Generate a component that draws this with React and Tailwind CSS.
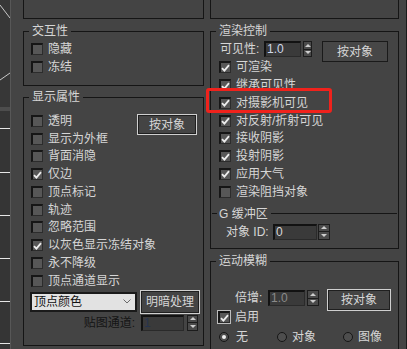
import React from 'react';

const Check = ({ checked, focus }) => (
    <span
        className={`w-[12px] h-[12px] shrink-0 flex items-center justify-center bg-[#575757] border-t-2 border-l-2 border-b border-r border-t-[#161616] border-l-[#161616] border-b-[#2c2c2c] border-r-[#2c2c2c] ${focus ? 'outline outline-1 outline-[#bdbdbd]' : ''}`}
    >
        {checked && (
            <svg width="9" height="8" viewBox="0 0 9 8">
                <path d="M1 4.2 L3.4 6.6 L8 1.2" stroke="#ececec" strokeWidth="1.8" fill="none" />
            </svg>
        )}
    </span>
);

const CheckRow = ({ label, checked, focus }) => (
    <div className="h-[17.75px] flex items-center gap-[5px]">
        <Check checked={checked} focus={focus} />
        <span className="leading-[14px] whitespace-nowrap">{label}</span>
    </div>
);

const Arrows = ({ className }) => (
    <div className={`h-[16px] shrink-0 flex flex-col border border-[#1c1c1c] bg-[#4a4a4a] ${className}`}>
        <div className="flex-1 flex items-center justify-center border-b border-[#1c1c1c]">
            <svg width="6" height="3" viewBox="0 0 6 3"><path d="M0 3 L3 0 L6 3Z" fill="#cdcdcd" /></svg>
        </div>
        <div className="flex-1 flex items-center justify-center">
            <svg width="6" height="3" viewBox="0 0 6 3"><path d="M0 0 L3 3 L6 0Z" fill="#cdcdcd" /></svg>
        </div>
    </div>
);

const Field = ({ value, className, textClass }) => (
    <div className={`h-[16px] shrink-0 bg-[#3a3a3a] border-t-2 border-l-2 border-t-[#121212] border-l-[#121212] border-b border-r border-b-[#2a2a2a] border-r-[#2a2a2a] pl-[1px] leading-[12px] text-[12px] ${className} ${textClass}`}>
        {value}
    </div>
);

const Button = ({ label, className }) => (
    <div className={`shrink-0 flex items-center justify-center border border-[#cfcfcf] bg-[#444] ${className}`}>
        <div className="w-full h-full flex items-center justify-center border border-[#1f1f1f] leading-[14px]">{label}</div>
    </div>
);

// group box: title sits on the top border
const Group = ({ title, className, children }) => (
    <div className={`shrink-0 border border-[#151515] ${className}`}>
        <div className="-mt-[8px] ml-[5px] px-[3px] w-fit bg-[#444] leading-[14px] whitespace-nowrap">{title}</div>
        {children}
    </div>
);

const Radio = ({ on }) => (
    <span className="w-[10px] h-[10px] rounded-full shrink-0 flex items-center justify-center bg-[#4e4e4e] border border-[#161616]">
        {on && <span className="w-[4px] h-[4px] rounded-full bg-[#f0f0f0]" />}
    </span>
);

const Viewport = () => (
    <svg width="10" height="349" viewBox="0 0 10 349" className="shrink-0">
        <rect x="0" y="0" width="10" height="107" fill="#373737" />
        <rect x="0" y="107" width="10" height="4" fill="#4d4d4d" />
        <rect x="0" y="111" width="10" height="238" fill="#353535" />
        <line x1="0" y1="5" x2="10" y2="18" stroke="#c8c8c8" strokeWidth="1" />
        <line x1="0" y1="80" x2="10" y2="73" stroke="#c8c8c8" strokeWidth="1" />
        {[128, 172, 215, 258, 301, 343].map((y) => (
            <line key={y} x1="0" y1={y + 0.5} x2="10" y2={y + 0.5} stroke="#e6e6e6" strokeWidth="1" />
        ))}
    </svg>
);

export default function App() {
    return (
        <div className="w-[407px] h-[349px] overflow-hidden relative flex bg-[#444] text-[12px] text-[#d6d6d6] font-['Liberation_Sans','Noto_Sans_CJK_SC',sans-serif]">
            <Viewport />
            <div className="w-px bg-[#575757] shrink-0" />

            <div className="flex gap-[6px] pl-[12px] shrink-0">
                {/* left column */}
                <div className="w-[181px] flex flex-col">
                    <div className="h-[19px] shrink-0 border-x border-b border-[#151515]" />

                    <Group title="交互性" className="mt-[12px] h-[55px]">
                        <div className="mt-[2px] pl-[7px]">
                            <div className="h-[18px] flex items-center gap-[5px]"><Check /><span className="leading-[14px]">隐藏</span></div>
                            <div className="h-[18px] flex items-center gap-[5px]"><Check /><span className="leading-[14px]">冻结</span></div>
                        </div>
                    </Group>

                    <Group title="显示属性" className="mt-[11px] h-[249px]">
                        <div className="mt-[8px] flex">
                            <div className="flex-1 min-w-0 pl-[7px]">
                                <CheckRow label="透明" />
                                <CheckRow label="显示为外框" />
                                <CheckRow label="背面消隐" />
                                <CheckRow label="仅边" checked />
                                <CheckRow label="顶点标记" />
                                <CheckRow label="轨迹" />
                                <CheckRow label="忽略范围" />
                                <CheckRow label="以灰色显示冻结对象" checked />
                                <CheckRow label="永不降级" />
                                <CheckRow label="顶点通道显示" />
                            </div>
                            <Button label="按对象" className="mt-[2px] mr-[6px] w-[60px] h-[21px]" />
                        </div>

                        <div className="h-[24px] flex items-center gap-[3px] pl-[6px]">
                            <div className="w-[107px] h-[20px] shrink-0 bg-[#e2e2e2] border-2 border-[#1a1a1a] flex items-center justify-between pl-[2px] pr-[4px] text-[#111] leading-[14px]">
                                <span>顶点颜色</span>
                                <svg width="8" height="5" viewBox="0 0 8 5"><path d="M0.5 0.5 L4 4 L7.5 0.5" stroke="#6a6a6a" strokeWidth="1" fill="none" /></svg>
                            </div>
                            <Button label="明暗处理" className="w-[60px] h-[24px]" />
                        </div>

                        <div className="mt-[1px] h-[16px] flex items-center justify-end pr-[5px]">
                            <span className="text-[#141414] leading-[14px] mr-[6px]">贴图通道:</span>
                            <Field value="1" className="w-[43px]" textClass="text-[#26344f]" />
                            <Arrows className="w-[11px] ml-[3px]" />
                        </div>
                    </Group>
                </div>

                {/* right column */}
                <div className="w-[189px] flex flex-col">
                    <div className="h-[19px] shrink-0 border-x border-b border-[#151515]" />

                    <Group title="渲染控制" className="mt-[12px] h-[218px]">
                        <div className="mt-[3px] h-[17.6px] flex items-start pl-[9px]">
                            <span className="leading-[16px] w-[42px] whitespace-nowrap">可见性:</span>
                            <Field value="1.0" className="ml-[2px] w-[37px]" textClass="text-[#cfd8ea]" />
                            <Arrows className="w-[9px] ml-[2px]" />
                            <div className="ml-[10px] w-[66px] h-[21px] shrink-0 border border-[#1a1a1a] bg-[#474747] flex items-center justify-center leading-[14px]">按对象</div>
                        </div>
                        <div className="pl-[8px]">
                            <CheckRow label="可渲染" checked />
                            <CheckRow label="继承可见性" checked />
                            <CheckRow label="对摄影机可见" checked />
                            <CheckRow label="对反射/折射可见" checked />
                            <CheckRow label="接收阴影" checked />
                            <CheckRow label="投射阴影" checked />
                            <CheckRow label="应用大气" checked />
                            <CheckRow label="渲染阻挡对象" />
                        </div>
                        <div className="mt-[6px] h-[14px] flex items-center pr-[1px]">
                            <div className="ml-[1px] w-[5px] h-px bg-[#151515]" />
                            <span className="ml-[2px] leading-[14px] whitespace-nowrap">G 缓冲区</span>
                            <div className="ml-[3px] flex-1 h-px bg-[#151515]" />
                        </div>
                        <div className="mt-[3px] h-[16px] flex items-center pl-[15px]">
                            <span className="w-[45px] leading-[14px] whitespace-nowrap">对象 ID:</span>
                            <Field value="0" className="ml-[2px] w-[44px]" textClass="text-[#d8d8d8]" />
                            <Arrows className="w-[12px] ml-[1px]" />
                        </div>
                    </Group>

                    <Group title="运动模糊" className="mt-[12px] h-[100px]">
                        <div className="mt-[21px] h-[19.6px] flex items-start pl-[24px]">
                            <span className="mt-[1px] w-[31px] leading-[16px]">倍增:</span>
                            <Field value="1.0" className="mt-[1px] ml-[2px] w-[37px] h-[15px]" textClass="text-[#8a8a8a]" />
                            <Arrows className="mt-[1px] ml-[2px] w-[12px]" />
                            <Button label="按对象" className="ml-[8px] w-[64px] h-[22px]" />
                        </div>
                        <div className="pl-[7px]">
                            <CheckRow label="启用" checked focus />
                        </div>
                        <div className="mt-[2px] h-[17.75px] flex items-center pl-[8px]">
                            <div className="w-[58px] flex items-center gap-[7px]"><Radio on /><span className="leading-[14px]">无</span></div>
                            <div className="w-[66px] flex items-center gap-[5px]"><Radio /><span className="leading-[14px]">对象</span></div>
                            <div className="flex items-center gap-[5px]"><Radio /><span className="leading-[14px]">图像</span></div>
                        </div>
                    </Group>
                </div>
            </div>

            <div className="ml-[7px] w-px bg-[#1a1a1a] shrink-0" />

            <div className="absolute left-[206px] top-[88px] w-[126px] h-[25px] border-[3px] border-[#f0221c] rounded-[3px]" />
        </div>
    );
}
